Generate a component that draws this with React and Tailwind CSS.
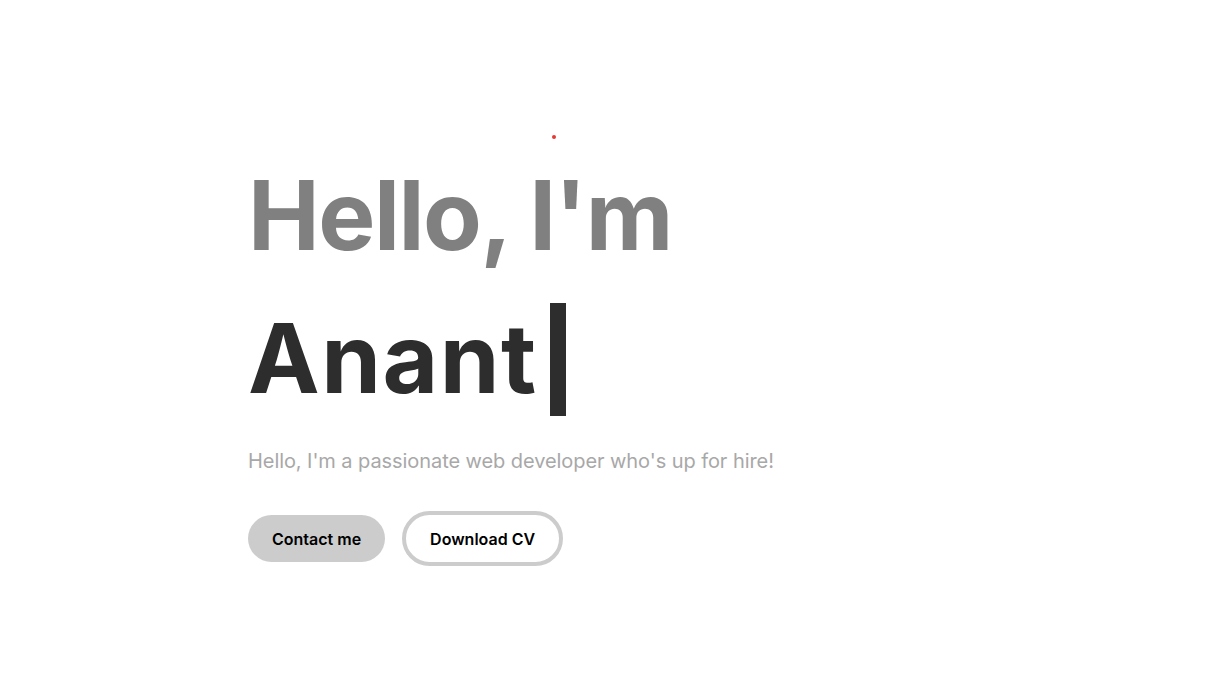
import React from 'react';

const App = () => {
  return (
    <div className="relative min-h-screen w-full bg-white font-['Inter',sans-serif]">
      {/* stray cursor dot */}
      <span className="absolute left-[552px] top-[135px] h-[4px] w-[4px] rounded-full bg-[#e53935]" />

      <section className="flex flex-col pl-[248px] pt-[157px]">
        <h1 className="text-[96px] font-bold leading-[116px] tracking-[-1.5px] text-[#808080]">Hello, I'm</h1>
        <div className="mt-[27px] flex h-[116px] items-center">
          <span className="text-[96px] font-bold leading-[116px] tracking-[1.5px] text-[#2d2d2d]">Anant</span>
          <span className="ml-[12px] mt-[2px] h-[113px] w-[16px] bg-[#2d2d2d]" />
        </div>

        <p className="mt-[31px] text-[20px] leading-[28px] tracking-[-0.07px] text-[#a8a8a8]">
          Hello, I'm a passionate web developer who's up for hire!
        </p>

        <div className="mt-[36px] flex items-center gap-[17px]">
          <button className="h-[47px] rounded-full bg-[#cccccc] px-6 text-[16px] font-semibold text-black">
            Contact me
          </button>
          <button className="h-[55px] rounded-full border-4 border-[#cccccc] bg-white px-6 text-[16px] font-semibold text-black">
            Download CV
          </button>
        </div>
      </section>
    </div>
  );
};

export default App;
